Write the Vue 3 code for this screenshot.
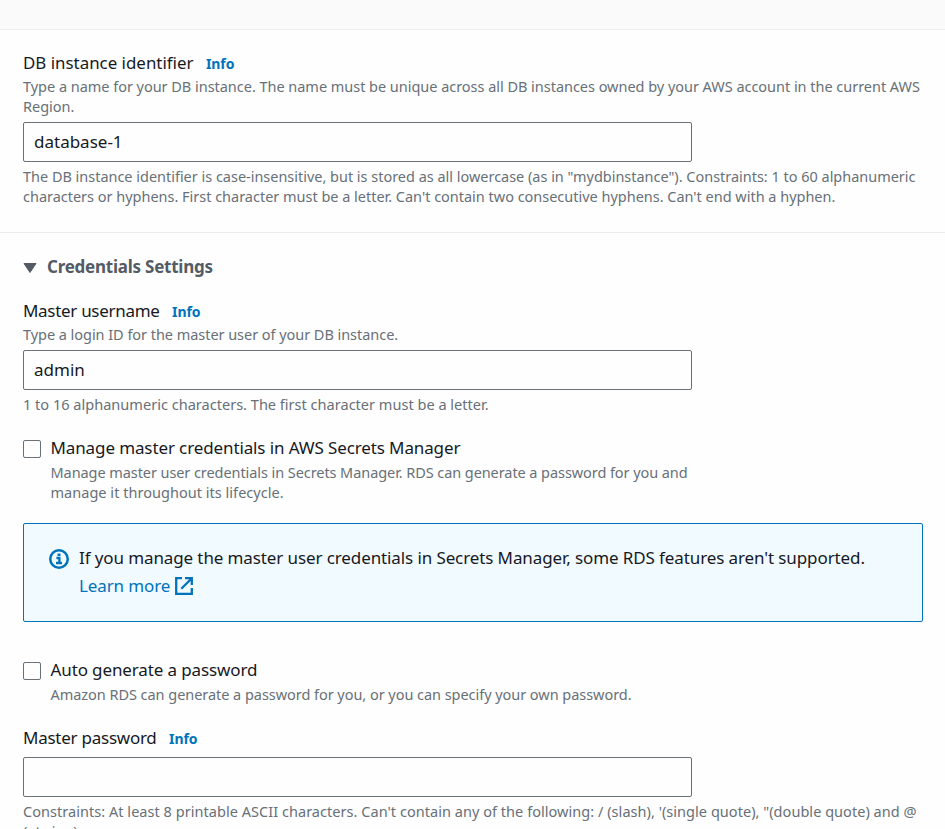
<script setup>
import { ref } from 'vue'

const identifier = ref('database-1')
const username = ref('admin')
const password = ref('')
const manageCredentials = ref(false)
const autoGenerate = ref(false)
</script>

<template>
  <main class="page">
    <div class="band"></div>
    <section class="section identity">
      <div class="label"><span class="t-id">DB instance identifier</span><a class="info">Info</a></div>
      <p class="hint"><span class="h1">Type a name for your DB instance. The name must be unique across all DB instances owned by your AWS account in the current AWS</span><span class="h1">Region.</span></p>
      <input v-model="identifier" class="field" type="text" aria-label="DB instance identifier" />
      <p class="hint"><span class="h2">The DB instance identifier is case-insensitive, but is stored as all lowercase (as in "mydbinstance"). Constraints: 1 to 60 alphanumeric</span><span class="h3">characters or hyphens. First character must be a letter. Can't contain two consecutive hyphens. Can't end with a hyphen.</span></p>
    </section>

    <section class="section credentials">
      <h3 class="heading">
        <svg class="caret" viewBox="0 0 14 12"><path d="M1 1.5H13L7 10.5Z" fill="#545b64" stroke="#545b64" stroke-linejoin="round" /></svg>
        <span>Credentials Settings</span>
      </h3>
      <div class="label"><span class="t-user">Master username</span><a class="info">Info</a></div>
      <p class="hint"><span class="h4">Type a login ID for the master user of your DB instance.</span></p>
      <input v-model="username" class="field" type="text" aria-label="Master username" />
      <p class="hint"><span class="h5">1 to 16 alphanumeric characters. The first character must be a letter.</span></p>

      <label class="check manage">
        <input v-model="manageCredentials" class="box" type="checkbox" />
        <span class="check-body">
          <span class="check-title t-manage">Manage master credentials in AWS Secrets Manager</span>
          <span class="hint check-hint"><span class="h6">Manage master user credentials in Secrets Manager. RDS can generate a password for you and</span><span class="h7">manage it throughout its lifecycle.</span></span>
        </span>
      </label>

      <div class="alert">
        <svg class="info-icon" viewBox="0 0 20 20" fill="none" stroke="#0073bb">
          <circle cx="10" cy="10" r="8.75" stroke-width="2.5" />
          <path d="M7.4 9H10.4V13.5M7 14H13" stroke-width="2.3" />
          <path d="M8.5 5.8H11.5" stroke-width="2.5" />
        </svg>
        <div class="alert-text">
          <div class="t-alert">If you manage the master user credentials in Secrets Manager, some RDS features aren't supported.</div>
          <a class="learn"><span>Learn more</span>
            <svg class="external" viewBox="0 0 18 18" fill="none" stroke="#0073bb" stroke-width="2.3">
              <path d="M7 1.2H1.2V16.8H16.8V11M10 1.2H16.8V8M16.3 1.7L6.3 11.7" />
            </svg>
          </a>
        </div>
      </div>

      <label class="check auto">
        <input v-model="autoGenerate" class="box" type="checkbox" />
        <span class="check-body">
          <span class="check-title t-auto">Auto generate a password</span>
          <span class="hint check-hint"><span class="h8">Amazon RDS can generate a password for you, or you can specify your own password.</span></span>
        </span>
      </label>

      <div class="label password"><span class="t-pass">Master password</span><a class="info">Info</a></div>
      <input v-model="password" class="field" type="password" aria-label="Master password" />
      <p class="hint"><span class="h9">Constraints: At least 8 printable ASCII characters. Can't contain any of the following: / (slash), '(single quote), "(double quote) and @</span><span class="h9">(at sign).</span></p>
    </section>
  </main>
</template>

<style>
body { margin: 0; overflow: hidden; background: #fefefe; }
</style>

<style scoped>
.page {
  height: 829px;
  overflow: hidden;
  background: #fefefe;
  color: #16191f;
  font-family: "Noto Sans", "Open Sans", sans-serif;
  font-size: 17px;
  white-space: nowrap;
}
.band { height: 29px; background: #fafafa; border-bottom: 1px solid #eaeded; }
.section { padding: 0 22px 0 23px; }
.identity { box-sizing: border-box; height: 203px; padding-top: 20px; border-bottom: 1px solid #eaeded; }
.label { display: flex; height: 27px; line-height: 25px; }
.info { margin-left: 12.5px; font-size: 14px; line-height: 27px; font-weight: 700; letter-spacing: -0.1px; color: #0073bb; }
.hint { display: block; margin: -1px 0 1px; font-size: 14.5px; line-height: 20px; color: #687078; }
.hint > span { display: block; height: 20px; }
.field {
  display: block;
  box-sizing: border-box;
  width: 669px;
  height: 40px;
  margin: 5px 0;
  padding: 0 10px 2px;
  border: 1px solid #687078;
  border-radius: 2px;
  background: #fefefe;
  color: #16191f;
  font: inherit;
  outline: none;
}
.hint + .field { margin-top: 6px; }
.heading { display: flex; align-items: center; height: 28px; margin: 20px 0 17px; font-size: 17px; line-height: 28px; font-weight: 700; letter-spacing: -0.24px; color: #545b64; }
.heading span { height: 28px; }
.caret { width: 14px; height: 12px; margin: 2px 10px 0 0; }
.check { display: flex; }
.box {
  appearance: none;
  box-sizing: border-box;
  width: 18px;
  height: 18px;
  margin: 5px 10px 0 0;
  border: 1px solid #687078;
  border-radius: 2px;
  background: #fefefe;
}
.check-body { display: block; margin-left: -0.5px; }
.check-title { display: block; line-height: 25px; height: 28px; }
.manage { margin-top: 21px; }
.alert {
  display: flex;
  box-sizing: border-box;
  width: 900px;
  height: 99px;
  margin-top: 20px;
  padding: 20px 25px;
  border: 1px solid #0073bb;
  border-radius: 2px;
  background: #f1faff;
}
.info-icon { width: 20px; height: 20px; margin: 5px 10px 0 0; }
.alert-text { line-height: 28px; }
.learn { display: flex; align-items: center; letter-spacing: -0.12px; color: #0073bb; }
.external { width: 18px; height: 18px; margin-left: 5px; }
.auto { margin-top: 35px; }
.password { margin-top: 20px; }
.t-id { font-size: 16.9px; }
.t-user { letter-spacing: -0.3px; }
.t-manage { letter-spacing: -0.115px; }
.t-alert { letter-spacing: -0.107px; }
.t-auto { letter-spacing: -0.12px; }
.t-pass { letter-spacing: -0.25px; }
.h1 { letter-spacing: -0.03px; }
.hint > .h2 { font-size: 14.46px; line-height: 22px; }
.h3 { letter-spacing: -0.017px; }
.h4 { letter-spacing: -0.045px; }
.h5 { font-size: 14.56px; }
.h6 { letter-spacing: -0.075px; }
.h7 { letter-spacing: 0.03px; }
.h8 { letter-spacing: -0.045px; }
.h9 { letter-spacing: 0.04px; }
</style>
